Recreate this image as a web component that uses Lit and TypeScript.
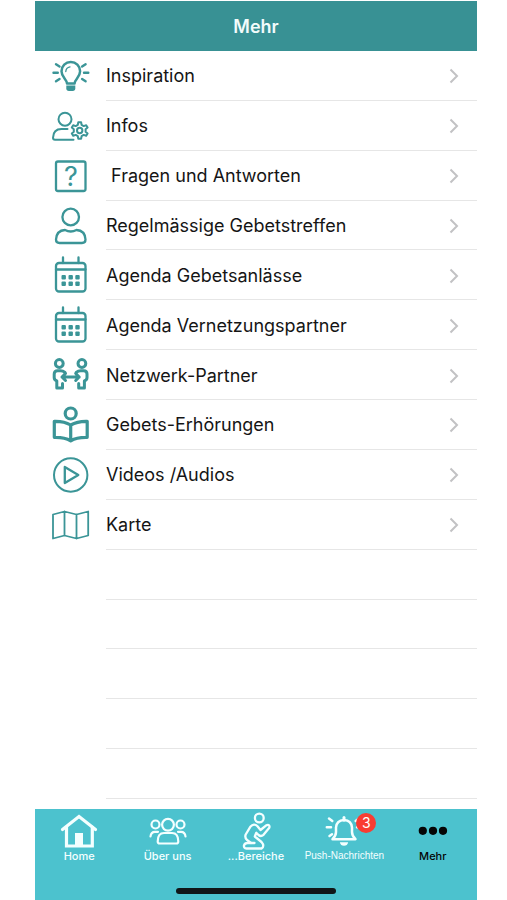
import { LitElement, html, svg, css, nothing, type SVGTemplateResult } from "lit";
import { customElement, property } from "lit/decorators.js";

const calendar = svg`
  <rect x="5" y="8" width="29.5" height="28.5" rx="3"/>
  <path d="M5 14.5h29.5M12 2.5V8M27.5 2.5V8"/>
  <g class="solid">
    <rect x="10.5" y="20" width="4.4" height="4.4" rx="1"/><rect x="17.5" y="20" width="4.4" height="4.4" rx="1"/><rect x="24.3" y="20" width="4.4" height="4.4" rx="1"/>
    <rect x="10.5" y="26.6" width="4.4" height="4.4" rx="1"/><rect x="17.5" y="26.6" width="4.4" height="4.4" rx="1"/><rect x="24.3" y="26.6" width="4.4" height="4.4" rx="1"/>
  </g>`;

const icons: Record<string, SVGTemplateResult> = {
  bulb: svg`
    <path stroke-width="2.500" d="M16 27.500C16 23.500 10.500 21.500 10.500 15.200A9.300 9.300 0 0 1 29.100 15.200C29.100 21.500 23.600 23.500 23.600 27.500Z"/>
    <path d="M14.800 15.500Q15 11.500 19 10.800" stroke-width="1.300"/>
    <path class="solid" d="M15.300 29.500h9v2.800q0 2.600-2.600 2.600h-3.800q-2.600 0-2.600-2.600z"/>
    <path stroke-width="2.400" d="M2.500 16.800H6.800M33 16.800H37.300M5 8.200L8.500 10.500M34.600 8.200L31.100 10.500M5 25.300L8.500 23M34.600 25.300L31.100 23"/>`,
  infos: svg`
    <g stroke-width="2">
      <circle cx="14" cy="13.200" r="6.500"/>
      <path d="M22.500 33.700H4Q2 33.700 2 31.700Q2.300 23 10.500 23H16.500"/>
      <path d="M26.800 18.900L27.300 16.300H30.100L30.600 18.900L32.700 20.100L35.200 19.200L36.600 21.600L34.600 23.300V25.700L36.600 27.400L35.200 29.800L32.700 28.900L30.600 30.100L30.100 32.700H27.300L26.800 30.100L24.700 28.900L22.200 29.800L20.800 27.400L22.800 25.700V23.300L20.800 21.600L22.200 19.200L24.700 20.100Z"/>
      <circle cx="28.700" cy="24.500" r="2.700"/>
    </g>`,
  question: svg`
    <rect x="5" y="5.500" width="29.500" height="29.500" rx="2"/>
    <text class="mark" x="19.800" y="29.500" text-anchor="middle">?</text>`,
  person: svg`
    <circle cx="19.700" cy="11" r="8.300"/>
    <path d="M5 33.500Q5.500 24.500 14 24Q19.700 27 25.500 24Q34 24.500 34.500 33.500Q34.500 37 31 37H8.500Q5 37 5 33.500Z"/>`,
  calendar,
  network: svg`
    <g stroke-width="3">
      <circle cx="8.300" cy="8.500" r="3.900"/><circle cx="30.900" cy="8.500" r="3.900"/>
      <path d="M14 17.500Q12 15.800 9.500 15.800H6.500Q3.200 15.800 3.200 19V22.500Q3.200 25 5.800 26V33H11.500V28.500"/>
      <path d="M25.200 17.500Q27.200 15.800 29.700 15.800H32.700Q36 15.800 36 19V22.500Q36 25 33.400 26V33H27.700V28.500"/>
      <path d="M11 22H28.200M14.500 18.500L11 22L14.500 25.500M24.700 18.500L28.200 22L24.700 25.500"/>
    </g>`,
  reader: svg`
    <g stroke-width="3.200">
      <circle cx="19.700" cy="8.500" r="5.500"/>
      <path d="M3.300 16.300Q13 16 19.700 20Q26.500 16 36.200 16.300V32.300Q26 32 19.700 35.800Q13.500 32 3.300 32.300ZM19.700 20V35.800"/>
    </g>`,
  play: svg`
    <circle cx="19.700" cy="20" r="16.700" stroke-width="2"/>
    <path d="M13.800 12L27.300 20L13.800 28Z"/>`,
  map: svg`
    <path stroke-width="1.800" d="M2 9.500L13.500 6.500L25.500 9.500L37.200 6.500V30.500L25.500 33.500L13.500 30.500L2 33.500ZM13.500 6.500V30.500M25.500 9.500V33.500"/>`,
  home: svg`
    <g stroke-width="3.200">
      <path d="M3.500 17.500L20 4.500L36.500 17.500" stroke-linejoin="miter"/>
      <path d="M7.500 15V34H33.300V15" stroke-linejoin="miter"/>
    </g>
    <path class="solid" d="M16 21h8v14h-8z"/>`,
  group: svg`
    <g stroke-width="2.200">
      <circle cx="20" cy="12.800" r="5.900"/><circle cx="7.500" cy="12.500" r="4"/><circle cx="32.500" cy="12.500" r="4"/>
      <path d="M9.700 29.500Q9.700 21 16 21H24Q30.300 21 30.300 29.500Q30.300 31.500 28.300 31.500H11.700Q9.700 31.500 9.700 29.500Z"/>
      <path d="M2.500 24.500Q3 19.800 7 19.800H10M37.500 24.500Q37 19.800 33 19.800H30"/>
    </g>`,
  pray: svg`
    <g stroke-width="2.300">
      <circle cx="23.300" cy="6" r="4.400"/>
      <path d="M14.300 14.800Q18 10.800 21.500 14.300L24.500 18L30.200 13.300Q34.300 12 33.300 15.800L27.500 22.800Q25 25 22.500 23L20.300 20.800L18.800 24.500L25.500 30Q29 34 25.500 36.500H10.500Q7.500 36 8 33.300Q8.800 31 11.500 31H15L11 28Q8.500 25.500 9.700 22.500Z"/>
      <path d="M15 31H18.500"/>
    </g>`,
  bell: svg`
    <path stroke-width="2.500" d="M8.500 27.200Q12 24 12 20V15.500Q12.500 8.500 20 8Q27.500 8.500 28 15.500V20Q28 24 31.500 27.200Z"/>
    <path d="M20 5.500V8" stroke-width="3"/>
    <path class="solid" d="M15.800 30.300h8.400q-.8 3.500-4.200 3.500t-4.200-3.500z"/>
    <path stroke-width="2.500" d="M2.800 15.300H7M5 6.500L8.300 9M5.500 24L8 22.300M33 15.300H37.200M35 6.500L31.700 9"/>`,
  dots: svg`
    <g class="solid"><circle cx="9.800" cy="18.800" r="4.100"/><circle cx="20" cy="18.800" r="4.100"/><circle cx="30" cy="18.800" r="4.100"/></g>`,
};

@customElement("line-icon")
class LineIcon extends LitElement {
  @property() name = "";

  static styles = css`
    :host {
      display: block;
      width: 40px;
      height: 40px;
    }
    .icon {
      display: block;
      width: 100%;
      height: 100%;
      overflow: visible;
      fill: none;
      stroke: currentColor;
      stroke-width: 2.3;
      stroke-linecap: round;
      stroke-linejoin: round;
    }
    .solid,
    .mark {
      fill: currentColor;
      stroke: none;
    }
    .mark {
      font: 400 27px Inter, sans-serif;
    }
  `;

  render() {
    return html`<svg class="icon" viewBox="0 0 40 40" aria-hidden="true">${icons[this.name]}</svg>`;
  }
}

interface Entry {
  icon: string;
  label: string;
}

interface Tab extends Entry {
  badge?: number;
  active?: boolean;
  compact?: boolean;
}

const entries: Entry[] = [
  { icon: "bulb", label: "Inspiration" },
  { icon: "infos", label: "Infos" },
  { icon: "question", label: " Fragen und Antworten" },
  { icon: "person", label: "Regelmässige Gebetstreffen" },
  { icon: "calendar", label: "Agenda Gebetsanlässe" },
  { icon: "calendar", label: "Agenda Vernetzungspartner" },
  { icon: "network", label: "Netzwerk-Partner" },
  { icon: "reader", label: "Gebets-Erhörungen" },
  { icon: "play", label: "Videos /Audios" },
  { icon: "map", label: "Karte" },
];

const tabs: Tab[] = [
  { icon: "home", label: "Home" },
  { icon: "group", label: "Über uns" },
  { icon: "pray", label: "...Bereiche" },
  { icon: "bell", label: "Push-Nachrichten", badge: 3, compact: true },
  { icon: "dots", label: "Mehr", active: true },
];

const emptyRows = [0, 1, 2, 3, 4];

@customElement("app-root")
class AppRoot extends LitElement {
  static styles = css`
    :host {
      display: flex;
      flex-direction: column;
      box-sizing: border-box;
      min-height: 100vh;
      padding: 1px 30px 0 35px;
      background: #fff;
      color: #151515;
      font-family: Inter, "Liberation Sans", sans-serif;
    }
    .header {
      display: flex;
      align-items: center;
      justify-content: center;
      height: 50px;
      background: #389194;
      color: #f2fbfb;
    }
    .title {
      margin: 0;
      padding-top: 2px;
      font-size: 18px;
      line-height: 24px;
      font-weight: 600;
    }
    .list {
      flex: 1;
      display: grid;
      grid-auto-rows: minmax(44px, 1fr);
      margin: 0;
      padding: 0 0 10px;
      list-style: none;
    }
    .row {
      display: flex;
    }
    .link {
      flex: 1;
      display: flex;
      align-items: center;
      gap: 15px;
      padding-left: 16px;
      color: inherit;
      text-decoration: none;
    }
    .line-icon {
      flex: none;
      color: #3b9597;
    }
    .body {
      flex: 1;
      align-self: stretch;
      display: flex;
      align-items: center;
      justify-content: space-between;
      padding: 2px 18px 0 0;
      border-bottom: 1px solid #e6e6e6;
    }
    .blank {
      flex: 1;
      margin-left: 71px;
      border-bottom: 1px solid #e6e6e6;
    }
    .label {
      font-size: 18px;
      line-height: 24px;
      white-space: pre;
    }
    .chevron {
      width: 10px;
      height: 16px;
      fill: none;
      stroke: #c2c2c4;
      stroke-width: 2;
    }
    .tabbar {
      display: flex;
      flex-direction: column;
      align-items: center;
      justify-content: space-between;
      height: 91px;
      padding-bottom: 6px;
      box-sizing: border-box;
      background: #4cc2ce;
    }
    .tabs {
      align-self: stretch;
      display: grid;
      grid-template-columns: repeat(5, minmax(0, 1fr));
      padding-top: 3px;
    }
    .tab {
      display: flex;
      flex-direction: column;
      align-items: center;
      color: #f4ffff;
      text-decoration: none;
    }
    .active {
      color: #050505;
    }
    .glyph {
      position: relative;
      height: 37px;
    }
    .badge {
      position: absolute;
      top: 1px;
      left: 32px;
      width: 20px;
      height: 20px;
      border-radius: 10px;
      background: #f93c33;
      color: #fff;
      font-size: 14px;
      line-height: 20px;
      text-align: center;
    }
    .caption {
      font-size: 11px;
      line-height: 14px;
      font-weight: 500;
      white-space: nowrap;
    }
    .compact {
      font-family: "Liberation Sans", sans-serif;
      font-size: 10px;
    }
    .indicator {
      width: 36%;
      height: 6px;
      border-radius: 3px;
      background: #101618;
    }
  `;

  render() {
    return html`
      <header class="header"><h1 class="title">Mehr</h1></header>
      <ul class="list">
        ${entries.map(
          (e) => html`<li class="row">
            <a class="link" href="#">
              <line-icon class="line-icon" name=${e.icon}></line-icon>
              <span class="body">
                <span class="label">${e.label}</span>
                <svg class="chevron" viewBox="0 0 10 16" aria-hidden="true"><path d="M1.500 1.500L8 8L1.500 14.500"/></svg>
              </span>
            </a>
          </li>`,
        )}
        ${emptyRows.map(() => html`<li class="row" aria-hidden="true"><span class="blank"></span></li>`)}
      </ul>
      <nav class="tabbar">
        <div class="tabs">
          ${tabs.map(
            (t) => html`<a class="tab ${t.active ? "active" : ""}" href="#" aria-current=${t.active ? "page" : nothing}>
              <span class="glyph">
                <line-icon name=${t.icon}></line-icon>
                ${t.badge ? html`<span class="badge">${t.badge}</span>` : nothing}
              </span>
              <span class="caption ${t.compact ? "compact" : ""}">${t.label}</span>
            </a>`,
          )}
        </div>
        <div class="indicator"></div>
      </nav>
    `;
  }
}
